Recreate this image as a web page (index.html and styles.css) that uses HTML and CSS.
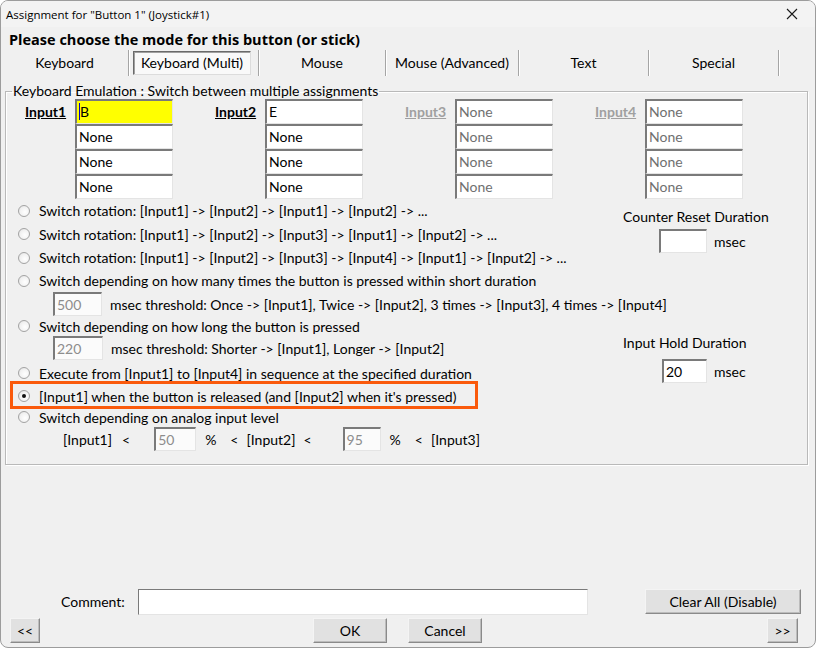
FILE: index.html
```html
<!DOCTYPE html>
<html>
<head>
<meta charset="utf-8">
<title>Assignment</title>
<link rel="stylesheet" href="styles.css">
</head>
<body>
<div class="window">
  <div class="titlebar">
    <span class="title">Assignment for "Button 1" (Joystick#1)</span>
    <svg class="close" width="12" height="12" viewBox="0 0 12 12"><path d="M1 1 L11 11 M11 1 L1 11" stroke="#1a1a1a" stroke-width="1.1" fill="none"/></svg>
  </div>
  <div class="heading">Please choose the mode for this button (or stick)</div>
  <div class="tabs">
    <div class="tab t1">Keyboard</div>
    <div class="tab t2"><span class="active-box">Keyboard (Multi)</span></div>
    <div class="tab t3">Mouse</div>
    <div class="tab t4">Mouse (Advanced)</div>
    <div class="tab t5">Text</div>
    <div class="tab t6">Special</div>
  </div>
  <fieldset class="group">
    <legend>Keyboard Emulation : Switch between multiple assignments</legend>
    <div class="inputs">
      <div class="col">
        <div class="inlabel">Input1</div>
        <div class="fields">
          <div class="field hl"><span class="caret"></span>B</div>
          <div class="field">None</div>
          <div class="field">None</div>
          <div class="field">None</div>
        </div>
      </div>
      <div class="col">
        <div class="inlabel">Input2</div>
        <div class="fields">
          <div class="field">E</div>
          <div class="field">None</div>
          <div class="field">None</div>
          <div class="field">None</div>
        </div>
      </div>
      <div class="col disabled">
        <div class="inlabel">Input3</div>
        <div class="fields">
          <div class="field">None</div>
          <div class="field">None</div>
          <div class="field">None</div>
          <div class="field">None</div>
        </div>
      </div>
      <div class="col disabled">
        <div class="inlabel">Input4</div>
        <div class="fields">
          <div class="field">None</div>
          <div class="field">None</div>
          <div class="field">None</div>
          <div class="field">None</div>
        </div>
      </div>
    </div>
    <div class="options-area">
      <div class="options">
        <div class="opt h23"><span class="radio"></span>Switch rotation: [Input1] -&gt; [Input2] -&gt; [Input1] -&gt; [Input2] -&gt; ...</div>
        <div class="opt h24"><span class="radio"></span>Switch rotation: [Input1] -&gt; [Input2] -&gt; [Input3] -&gt; [Input1] -&gt; [Input2] -&gt; ...</div>
        <div class="opt h23"><span class="radio"></span>Switch rotation: [Input1] -&gt; [Input2] -&gt; [Input3] -&gt; [Input4] -&gt; [Input1] -&gt; [Input2] -&gt; ...</div>
        <div class="opt h23"><span class="radio"></span>Switch depending on how many times the button is pressed within short duration</div>
        <div class="sub"><span class="field small dis w49">500</span><span class="subtext">msec threshold: Once -&gt; [Input1], Twice -&gt; [Input2], 3 times -&gt; [Input3], 4 times -&gt; [Input4]</span></div>
        <div class="opt h20"><span class="radio"></span>Switch depending on how long the button is pressed</div>
        <div class="sub"><span class="field small dis w50">220</span><span class="subtext">msec threshold: Shorter -&gt; [Input1], Longer -&gt; [Input2]</span></div>
        <div class="opt h24 mt1"><span class="radio"></span>Execute from [Input1] to [Input4] in sequence at the specified duration</div>
        <div class="opt h22 selected"><span class="radio on"></span>[Input1] when the button is released (and [Input2] when it's pressed)<span class="highlight"></span></div>
        <div class="opt h20"><span class="radio"></span>Switch depending on analog input level</div>
        <div class="analog">
          <span class="a1">[Input1]</span>
          <span class="lt1">&lt;</span>
          <span class="field small dis w42">50</span>
          <span class="pct">%</span>
          <span class="lt2">&lt;</span>
          <span class="a2">[Input2]</span>
          <span class="lt3">&lt;</span>
          <span class="field small dis w38">95</span>
          <span class="pct">%</span>
          <span class="lt2">&lt;</span>
          <span class="a3">[Input3]</span>
        </div>
      </div>
      <div class="side">
        <div class="side-block first">
          <div class="side-label">Counter Reset Duration</div>
          <div class="side-row p36"><span class="field small w48"></span><span class="msec">msec</span></div>
        </div>
        <div class="side-block second">
          <div class="side-label">Input Hold Duration</div>
          <div class="side-row p39"><span class="field small w45 dark">20</span><span class="msec">msec</span></div>
        </div>
      </div>
    </div>
  </fieldset>
  <div class="spacer"></div>
  <div class="comment-row">
    <span class="comment-label">Comment:</span>
    <span class="field comment"></span>
    <button class="btn clear">Clear All (Disable)</button>
  </div>
  <div class="button-row">
    <button class="btn prev">&lt;&lt;</button>
    <button class="btn ok">OK</button>
    <button class="btn cancel">Cancel</button>
    <button class="btn next">&gt;&gt;</button>
  </div>
</div>
</body>
</html>
```
FILE: styles.css
```css
* { box-sizing: border-box; }
html, body { margin: 0; padding: 0; background: #ffffff; }
body { font-family: "Lato", "Open Sans", sans-serif; font-size: 14px; color: #000; }

.window {
  width: 816px;
  height: 648px;
  border: 1px solid #9c9c9c;
  border-radius: 8px;
  background: #f0f0f0;
  overflow: hidden;
  display: flex;
  flex-direction: column;
}

.titlebar {
  height: 26px;
  flex: none;
  display: flex;
  align-items: center;
  justify-content: space-between;
  padding: 0 17px 0 5px;
  background: #f3f3f3;
  font-family: "Open Sans", sans-serif;
  font-size: 11.5px;
}
.close { display: block; }

.heading {
  flex: none;
  height: 23px;
  padding: 3px 0 0 8px;
  line-height: 20px;
  font-family: "Open Sans", sans-serif;
  font-weight: bold;
  font-size: 14.5px;
}

.tabs {
  flex: none;
  display: flex;
  height: 26px;
}
.tab {
  height: 26px;
  line-height: 25px;
  text-align: center;
  border-right: 1px solid #a5a5a5;
  box-shadow: 1px 0 0 #ffffff;
}
.t1 { width: 128px; }
.t2 { width: 130px; text-align: left; padding-left: 4px; }
.t3 { width: 127px; }
.t4 { width: 133px; }
.t5 { width: 130px; }
.t6 { width: 130px; }
.active-box {
  display: inline-block;
  width: 118px;
  height: 24px;
  line-height: 21px;
  text-align: center;
  border: 1px solid;
  border-color: #6a6a6a #dcdcdc #dcdcdc #6a6a6a;
  box-shadow: inset 1px 1px 0 #a0a0a0;
  background: #f9f9f9;
}

.group {
  flex: none;
  margin: 5px 7px 0 4px;
  padding: 0 0 13px 0;
  border: 1px solid #b9b9b9;
  box-shadow: inset 1px 1px 0 #ffffff, 1px 1px 0 #ffffff;
  min-width: 0;
}
.group legend {
  margin-left: 6px;
  padding: 0 1px;
  line-height: 20px;
}

.inputs {
  display: flex;
  padding-left: 19px;
  margin-top: -2px;
}
.col {
  width: 190px;
  display: flex;
}
.inlabel {
  width: 50px;
  height: 25px;
  line-height: 25px;
  font-weight: bold;
  text-decoration: underline;
}
.disabled .inlabel { color: #a0a0a0; }
.fields { display: flex; flex-direction: column; }

.field {
  display: block;
  flex: none;
  width: 98px;
  height: 25px;
  line-height: 21px;
  padding-left: 2px;
  background: #ffffff;
  border-style: solid;
  border-width: 2px 1px 1px 2px;
  border-color: #7a7a7a #e4e4e4 #e4e4e4 #7a7a7a;
  white-space: nowrap;
}
.field.hl { background: #ffff00; position: relative; }
.caret {
  display: inline-block;
  width: 1px;
  height: 17px;
  background: #0000c8;
  vertical-align: -3px;
  margin-right: 0;
}
.disabled .field { color: #707070; }

.field.small { display: inline-block; height: 24px; }
.field.dis { color: #8d8d8d; background: #fbfbfb; }
.field.dark { color: #000; }
.w38 { width: 38px; }
.w42 { width: 42px; }
.w45 { width: 45px; }
.w48 { width: 48px; }
.w49 { width: 49px; }
.w50 { width: 50px; }

.options-area {
  display: flex;
}
.options {
  width: 617px;
  flex: none;
}
.opt {
  position: relative;
  display: flex;
  align-items: center;
  padding-left: 12px;
  white-space: nowrap;
}
.h20 { height: 20px; }
.h22 { height: 22px; }
.h23 { height: 23px; }
.h24 { height: 24px; }
.mt1 { margin-top: 1px; }

.radio {
  flex: none;
  width: 12px;
  height: 12px;
  margin-right: 9px;
  border-radius: 50%;
  border: 1px solid #a3a3a3;
  background: radial-gradient(circle at 60% 60%, #ffffff 0%, #f2f2f2 55%, #dcdcdc 100%);
  position: relative;
}
.radio.on::after {
  content: "";
  position: absolute;
  left: 3px;
  top: 3px;
  width: 4px;
  height: 4px;
  border-radius: 50%;
  background: #111;
}
.highlight {
  position: absolute;
  left: 4px;
  top: -4px;
  width: 468px;
  height: 28px;
  border: 3px solid #fa5a0c;
  pointer-events: none;
}

.sub {
  display: flex;
  align-items: center;
  padding-left: 47px;
  height: 24px;
}
.subtext { margin-left: 8px; white-space: nowrap; }

.analog {
  display: flex;
  align-items: center;
  height: 24px;
  padding-left: 57px;
  white-space: nowrap;
}
.lt1 { margin-left: 10px; margin-right: 24px; }
.pct { margin-left: 9px; }
.lt2 { margin-left: 14px; margin-right: 8px; }
.lt3 { margin-left: 8px; margin-right: 31px; }

.side {
  flex: none;
  width: 180px;
}
.side-block.first { margin-top: 8px; }
.side-block.second { margin-top: 80px; }
.side-label { height: 20px; line-height: 20px; white-space: nowrap; }
.side-row { display: flex; align-items: center; margin-top: 2px; }
.side-block.second .side-row { margin-top: 6px; }
.p36 { padding-left: 36px; }
.p39 { padding-left: 39px; }
.msec { margin-left: 7px; }

.spacer { flex: 1; }

.comment-row {
  flex: none;
  display: flex;
  align-items: flex-start;
  height: 29px;
  padding-left: 60px;
}
.comment-label { line-height: 26px; width: 65px; }
.field.comment {
  width: 450px;
  height: 26px;
  margin-left: 12px;
  border-width: 1px;
  border-color: #7a7a7a #e4e4e4 #e4e4e4 #7a7a7a;
}
.btn {
  font-family: inherit;
  font-size: 14px;
  color: #000;
  height: 25px;
  padding: 0;
  background: #e1e1e1;
  border: 1px solid;
  border-color: #f4f4f4 #8a8a8a #8a8a8a #f4f4f4;
  box-shadow: inset -1px -1px 0 #bcbcbc;
  outline: none;
}
.clear { width: 156px; margin-left: 57px; }

.button-row {
  flex: none;
  display: flex;
  height: 29px;
  padding: 0 17px 4px 9px;
}
.prev { width: 30px; }
.ok { width: 74px; margin-left: 273px; }
.cancel { width: 74px; margin-left: 21px; }
.next { width: 31px; margin-left: auto; }
```
